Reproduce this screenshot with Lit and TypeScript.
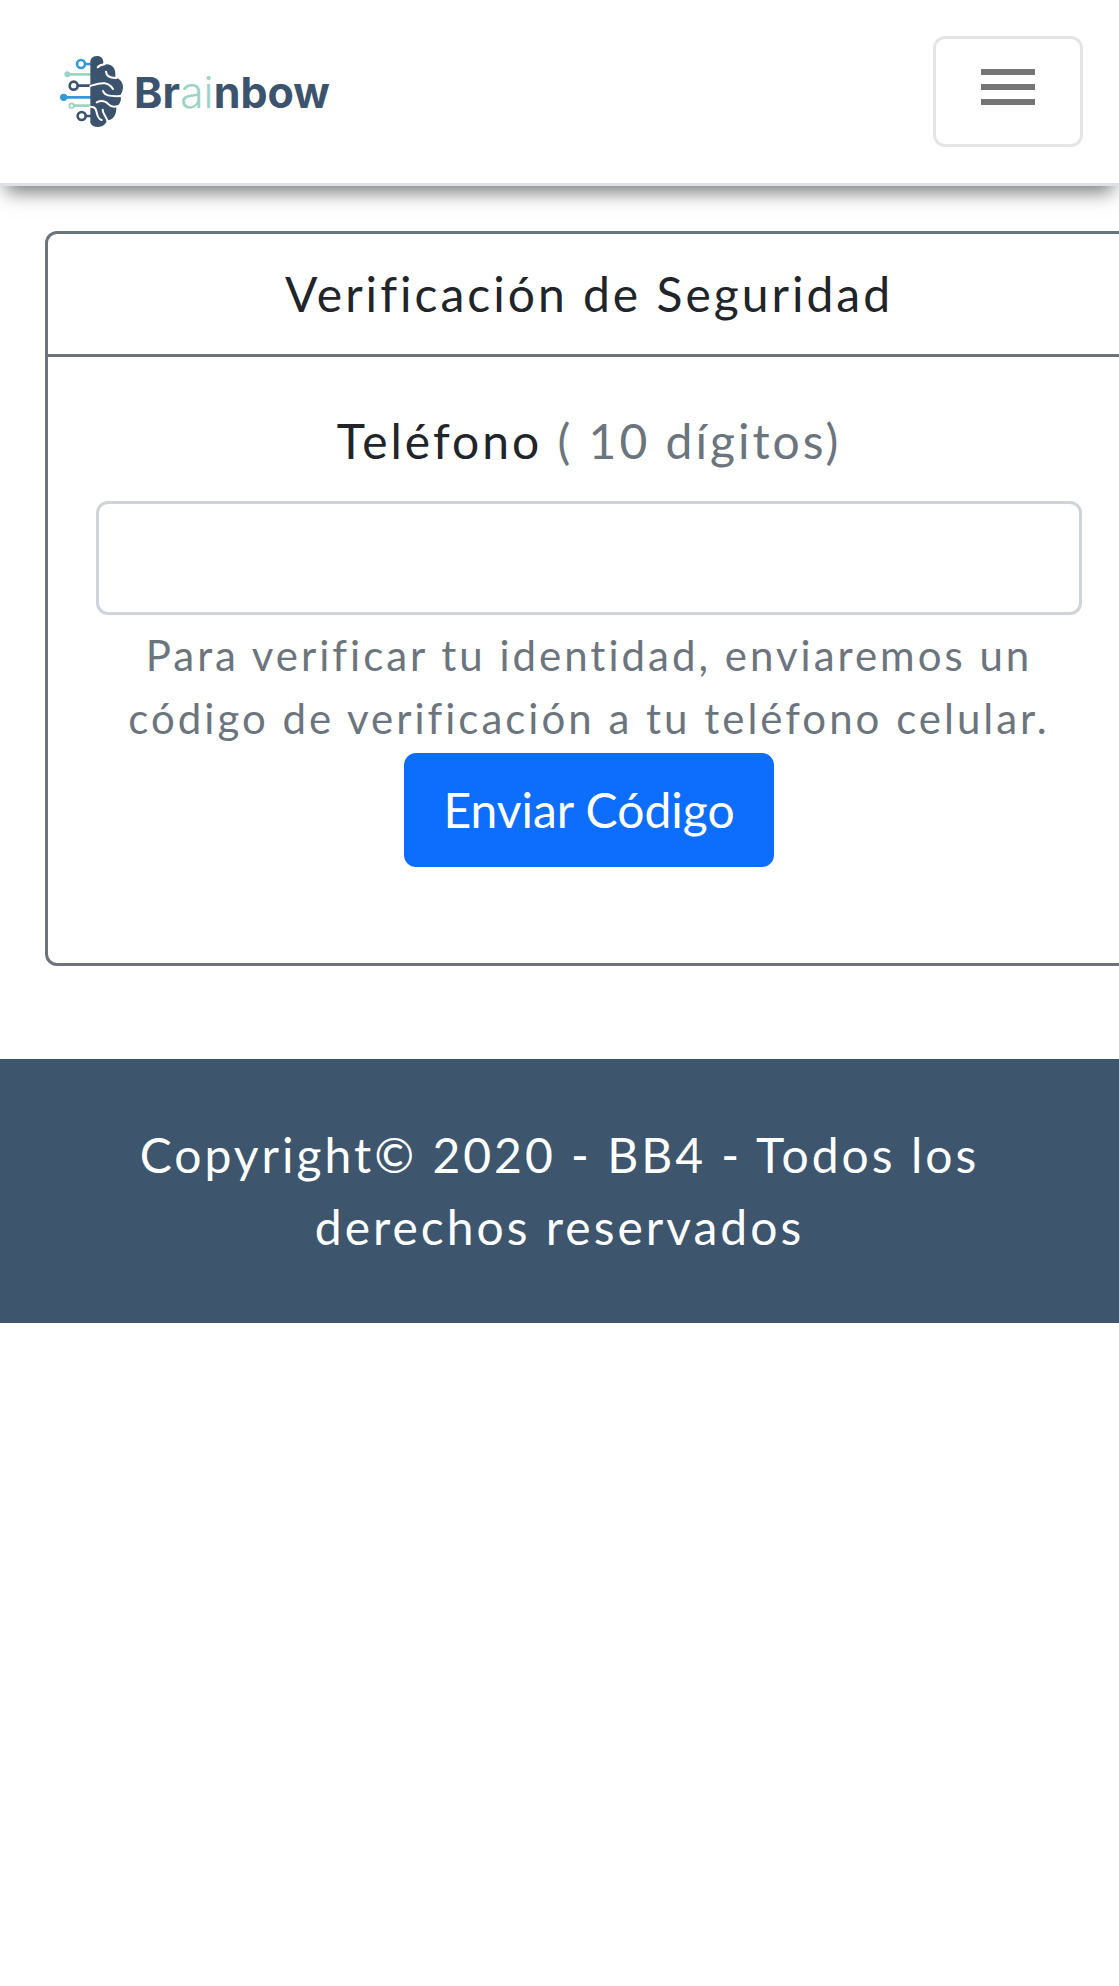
import { LitElement, html, css, svg } from "lit";
import { customElement, state } from "lit/decorators.js";

@customElement("brand-logo")
export class BrandLogo extends LitElement {
  static styles = css`
    :host {
      display: block;
    }
    .brand {
      display: flex;
      align-items: center;
      gap: 10px;
      color: #3c536e;
      text-decoration: none;
      font: 700 43px/48px Inter, "Open Sans", sans-serif;
      letter-spacing: normal;
    }
    .thin {
      font-weight: 300;
      color: #9dd3c4;
    }
    .mark {
      display: block;
      width: 64px;
      height: 73px;
    }
  `;

  private mark = svg`
    <g fill="none" stroke-width="8">
      <g stroke="#3498db"><circle cx="93" cy="72" r="12"/><path d="M105 72H124M45 172H124"/></g>
      <g stroke="#9dd3c4"><path d="M52 103H124M72 197H124"/><circle cx="65" cy="197" r="7" stroke-width="5"/></g>
      <g stroke="#3c536e"><circle cx="71" cy="137" r="12"/><circle cx="95" cy="228" r="12"/><path d="M83 137H124M107 228H124"/></g>
    </g>
    <circle cx="41" cy="172" r="11" fill="#3498db"/>
    <circle cx="52" cy="103" r="9" fill="#9dd3c4"/>
    <path fill="#3c536e" d="M121 62C124 51 134 47 144 48C154 49 160 57 160 66C160 70 158 73 158 75C172 70 186 75 192 85C197 94 196 103 196 112C211 117 219 128 219 142C219 153 214 160 211 166C216 180 210 194 199 200C200 222 191 240 171 241C167 255 156 261 144 261C132 261 124 256 121 248Z"/>
    <g fill="none" stroke="#fff" stroke-width="6" stroke-linecap="round">
      <path d="M143 82C147 77 154 74 164 73"/>
      <path d="M168 95C169 109 180 115 200 114"/>
      <path d="M121 138C140 132 150 128 164 130C178 132 184 139 189 147"/>
      <path d="M159 153C164 166 176 170 214 168"/>
      <path d="M140 187C154 180 168 183 176 193C182 200 190 202 203 199"/>
      <path d="M121 200C137 199 139 211 141 221C143 231 148 238 155 240"/>
      <path d="M158 209C157 220 168 228 173 244"/>
    </g>`;

  render() {
    return html`
      <a class="brand" href="#" aria-label="Brainbow">
        <svg class="mark" viewBox="30 45 192 219" aria-hidden="true">${this.mark}</svg>
        <span>Br<span class="thin">ai</span>nbow</span>
      </a>
    `;
  }
}

@customElement("app-root")
export class AppRoot extends LitElement {
  @state() private menuOpen = false;
  @state() private phone = "";

  static styles = css`
    :host {
      display: block;
      overflow-x: hidden;
      background: #fff;
      color: #212529;
      font-family: Lato, "Liberation Sans", sans-serif;
      font-size: 48px;
      line-height: 72px;
      letter-spacing: 3px;
    }
    *,
    *::before,
    *::after {
      box-sizing: border-box;
    }
    .navbar {
      display: flex;
      align-items: center;
      justify-content: space-between;
      padding: 36px 36px 36px 60px;
      border-bottom: 3px solid #dee2e6;
      box-shadow: 0 12px 18px -6px #777;
    }
    .toggle {
      display: block;
      padding: 12px 36px 21px;
      border: 3px solid rgba(0, 0, 0, 0.1);
      border-radius: 12px;
      background: transparent;
      color: #757575;
      cursor: pointer;
    }
    .toggle svg {
      display: block;
      width: 72px;
      height: 72px;
    }
    .card {
      margin: 45px -14px 93px 45px;
      border: 3px solid #6c757d;
      border-radius: 12px;
      text-align: center;
    }
    .card-title {
      margin: 0;
      padding: 24px 48px;
      border-bottom: 3px solid #6c757d;
      font: inherit;
    }
    .card-body {
      display: flex;
      flex-direction: column;
      align-items: center;
      padding: 48px 48px 96px;
    }
    .label {
      margin-bottom: 24px;
    }
    .muted {
      color: #6c757d;
    }
    .field {
      width: 100%;
      padding: 18px 36px;
      border: 3px solid #ced4da;
      border-radius: 12px;
      background: #fff;
      color: #212529;
      font: inherit;
    }
    .help {
      margin: 9px 0 3px;
      color: #6c757d;
      font-size: 42px;
      line-height: 63px;
    }
    .submit {
      padding: 18px 36px;
      border: 3px solid #0d6efd;
      border-radius: 12px;
      background: #0d6efd;
      color: #fff;
      font: inherit;
      cursor: pointer;
    }
    .footer {
      padding: 60px 48px;
      background: #3e556e;
      color: #fff;
      text-align: center;
    }
  `;

  render() {
    return html`
      <header class="navbar">
        <brand-logo></brand-logo>
        <button
          class="toggle"
          type="button"
          aria-label="Menú"
          aria-expanded=${this.menuOpen ? "true" : "false"}
          @click=${() => (this.menuOpen = !this.menuOpen)}
        >
          <svg viewBox="0 0 24 24" fill="currentColor" aria-hidden="true">
            <path d="M3 18h18v-2H3v2zm0-5h18v-2H3v2zm0-7v2h18V6H3z" />
          </svg>
        </button>
      </header>
      <main>
        <section class="card">
          <h1 class="card-title">Verificación de Seguridad</h1>
          <form class="card-body" @submit=${(e: Event) => e.preventDefault()}>
            <label class="label" for="phone">Teléfono <span class="muted">( 10 dígitos)</span></label>
            <input
              class="field"
              id="phone"
              type="tel"
              maxlength="10"
              aria-describedby="phone-help"
              .value=${this.phone}
              @input=${(e: Event) => (this.phone = (e.target as HTMLInputElement).value)}
            />
            <p class="help" id="phone-help">
              Para verificar tu identidad, enviaremos un código de verificación a tu teléfono celular.
            </p>
            <button class="submit" type="submit">Enviar Código</button>
          </form>
        </section>
      </main>
      <footer class="footer">Copyright© 2020 - BB4 - Todos los derechos reservados</footer>
    `;
  }
}
